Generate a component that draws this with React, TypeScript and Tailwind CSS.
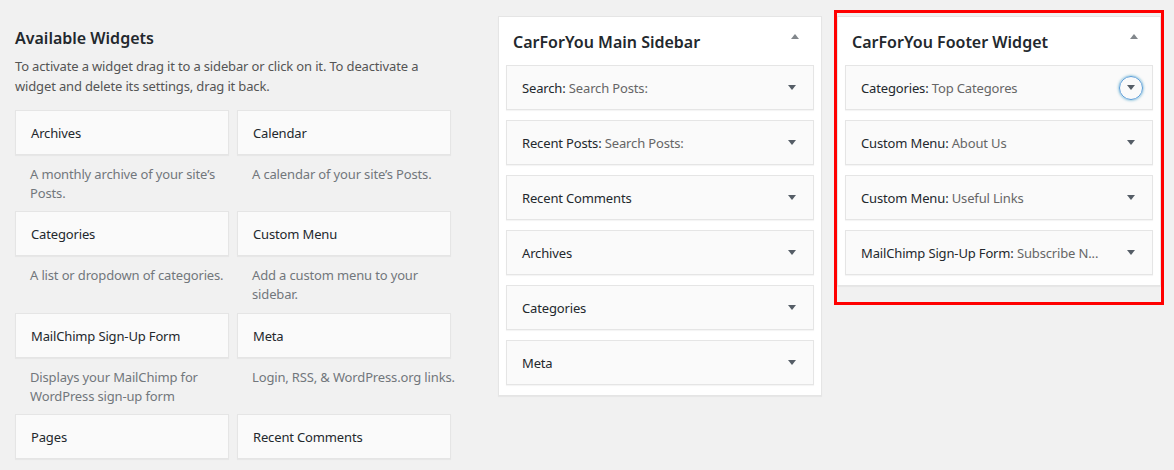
import React from "react";

const font = { fontFamily: '"Noto Sans", "Open Sans", Arial, sans-serif' };

function DownArrow() {
  return (
    <span className="block w-0 h-0 border-l-[4px] border-r-[4px] border-t-[5px] border-l-transparent border-r-transparent border-t-[#555d66]" />
  );
}

function UpArrow() {
  return (
    <span className="block w-0 h-0 border-l-[4px] border-r-[4px] border-b-[5px] border-l-transparent border-r-transparent border-b-[#82878c]" />
  );
}

type Avail = { title: string; desc: React.ReactNode };

const available: Avail[] = [
  { title: "Archives", desc: <>A monthly archive of your site’s<br />Posts.</> },
  { title: "Calendar", desc: <>A calendar of your site’s Posts.</> },
  { title: "Categories", desc: <>A list or dropdown of categories.</> },
  { title: "Custom Menu", desc: <>Add a custom menu to your<br />sidebar.</> },
  { title: "MailChimp Sign-Up Form", desc: <>Displays your MailChimp for<br />WordPress sign-up form</> },
  { title: "Meta", desc: <>Login, RSS, &amp; WordPress.org links.</> },
  { title: "Pages", desc: <></> },
  { title: "Recent Comments", desc: <></> },
];

type Item = { name: string; sub?: string; focus?: boolean };

function SidebarItem({ item }: { item: Item }) {
  return (
    <div className="h-[45px] border border-[#e5e5e5] bg-[#fafafa] shadow-[0_1px_1px_rgba(0,0,0,0.04)] flex items-center justify-between pl-[15px] pr-[17px]">
      <div className="pt-[2px] text-[13px] tracking-[-0.15px] text-[#23282d] whitespace-nowrap">
        {item.name}
        {item.sub !== undefined && (
          <>
            :<span className="text-[#666]"> {item.sub}</span>
          </>
        )}
      </div>
      <span className="relative flex items-center justify-center">
        {item.focus && (
          <span className="absolute left-1/2 top-1/2 -translate-x-1/2 -translate-y-1/2 w-[24px] h-[24px] rounded-full border border-[#5b9dd9] shadow-[0_0_3px_rgba(30,140,190,0.8)]" />
        )}
        <DownArrow />
      </span>
    </div>
  );
}

function Panel({ title, items }: { title: string; items: Item[] }) {
  return (
    <div className="w-[324px] bg-white border border-[#e5e5e5] shadow-[0_1px_1px_rgba(0,0,0,0.04)]">
      <div className="h-[48px] flex items-start justify-between pl-[14px] pr-[22px]">
        <h3 className="mt-[13px] text-[16px] leading-[24px] font-semibold text-[#23282d] whitespace-nowrap">
          {title}
        </h3>
        <span className="mt-[17px]">
          <UpArrow />
        </span>
      </div>
      <div className="flex flex-col gap-[10px] px-[7px] pb-[10px]">
        {items.map((it, i) => (
          <SidebarItem key={i} item={it} />
        ))}
      </div>
    </div>
  );
}

const rowHeights = ["h-[101px]", "h-[101px]", "h-[102px]", "h-[102px]", "h-[101px]", "h-[101px]", "h-[101px]", "h-[101px]"];

export default function App() {
  const mainItems: Item[] = [
    { name: "Search", sub: "Search Posts:" },
    { name: "Recent Posts", sub: "Search Posts:" },
    { name: "Recent Comments" },
    { name: "Archives" },
    { name: "Categories" },
    { name: "Meta" },
  ];
  const footerItems: Item[] = [
    { name: "Categories", sub: "Top Categores", focus: true },
    { name: "Custom Menu", sub: "About Us" },
    { name: "Custom Menu", sub: "Useful Links" },
    { name: "MailChimp Sign-Up Form", sub: "Subscribe N..." },
  ];

  return (
    <div className="w-[1174px] h-[470px] bg-[#f1f1f1] overflow-hidden flex items-start" style={font}>
      <div className="ml-[15px] w-[436px] shrink-0">
        <h2 className="mt-[26px] text-[16px] leading-[24px] font-semibold text-[#23282d]">
          Available Widgets
        </h2>
        <p className="mt-[6px] text-[13px] leading-[20px] tracking-[-0.15px] text-[#555] whitespace-nowrap">
          To activate a widget drag it to a sidebar or click on it. To deactivate a<br />
          widget and delete its settings, drag it back.
        </p>
        <div className="mt-[14px] grid grid-cols-2 gap-x-[8px]">
          {available.map((w, i) => (
            <div key={i} className={rowHeights[i]}>
              <div className="h-[45px] border border-[#e5e5e5] bg-[#fafafa] shadow-[0_1px_1px_rgba(0,0,0,0.04)] flex items-center px-[15px] pt-[2px] text-[13px] tracking-[-0.15px] text-[#23282d]">
                {w.title}
              </div>
              <div className="px-[15px] pt-[10px] text-[13px] leading-[19px] tracking-[-0.15px] text-[#72777c] whitespace-nowrap">
                {w.desc}
              </div>
            </div>
          ))}
        </div>
      </div>

      <div className="ml-[47px] mt-[16px] shrink-0">
        <Panel title="CarForYou Main Sidebar" items={mainItems} />
      </div>

      <div className="relative ml-[15px] mt-[16px] shrink-0">
        <Panel title="CarForYou Footer Widget" items={footerItems} />
        <div className="absolute left-[-3px] top-[-6px] w-[330px] h-[295px] border-[3px] border-[#ff0000] pointer-events-none" />
      </div>
    </div>
  );
}
